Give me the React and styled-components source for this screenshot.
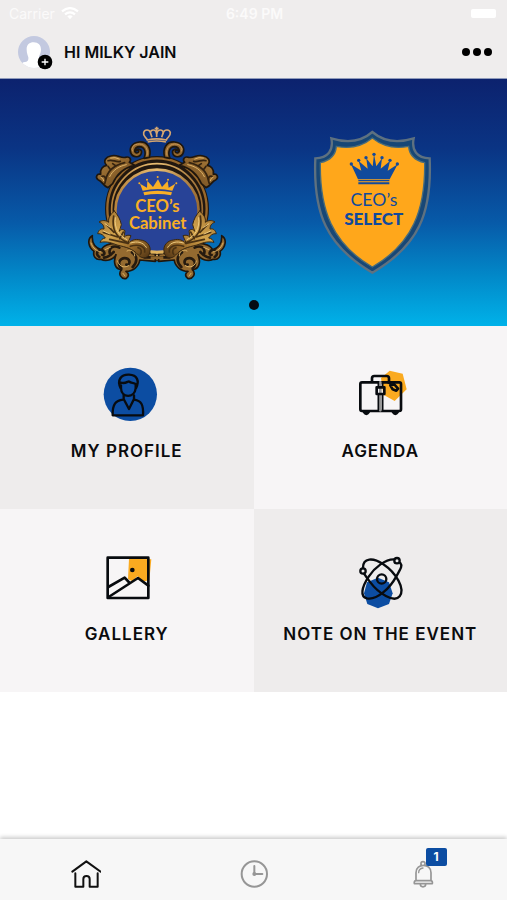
import React from 'react'
import styled, { createGlobalStyle } from 'styled-components'

const GlobalStyle = createGlobalStyle`
* { box-sizing: border-box; }
body {
  margin: 0;
  background: #fff;
  font-family: Inter, "Liberation Sans", sans-serif;
  color: #0b0b0d;
}
`;

const Page = styled.div`
  min-height: 100vh;
  display: flex;
  flex-direction: column;
`;

const Header = styled.header`
  background: #efeded;
  border-bottom: 1px solid #8f9bbb;
`;

const StatusBar = styled.div`
  display: grid;
  grid-template-columns: 1fr auto 1fr;
  align-items: center;
  height: 27px;
  padding: 0 11px 0 9px;
  color: #fbfafa;
  font-size: 14px;
`;

const Carrier = styled.div`
  display: flex;
  align-items: center;
  gap: 6px;
`;

const Time = styled.span`
  font-weight: 600;
  padding-left: 4px;
`;

const Battery = styled.span`
  justify-self: end;
  width: 25px;
  height: 9px;
  border-radius: 2px;
  background: #fff;
`;

const UserBar = styled.div`
  display: flex;
  align-items: center;
  height: 51px;
  padding: 0 15px 2px 17px;
  gap: 11px;
`;

const Name = styled.h1`
  flex: 1;
  margin: 0;
  font-size: 16px;
  line-height: 24px;
  font-weight: 600;
`;

const IconButton = styled.button`
  display: flex;
  padding: 0;
  border: 0;
  background: none;
  cursor: pointer;
`;

const Banner = styled.section`
  display: flex;
  flex-direction: column;
  align-items: center;
  gap: 10px;
  padding: 36px 0 16px;
  background: linear-gradient(#0c226e 0%, #0a3484 28%, #075aa8 58%, #0289c9 80%, #00b2e9 100%);
`;

const Awards = styled.div`
  display: flex;
  align-items: center;
  justify-content: center;
  gap: 65px;
  padding-left: 18px;
`;

const Dot = styled.span`
  width: 10px;
  height: 10px;
  border-radius: 50%;
  background: #050b12;
`;

const Tiles = styled.main`
  display: grid;
  grid-template-columns: 1fr 1fr;
`;

const Tile = styled.a`
  display: flex;
  flex-direction: column;
  align-items: center;
  gap: 12px;
  padding: 37px 0 46px;
  background: ${(props) => (props.$dark ? '#eeecec' : '#f7f5f6')};
  color: inherit;
  text-decoration: none;
  font-size: 17px;
  line-height: 24px;
  font-weight: 600;
  letter-spacing: 1px;
`;

const TabBar = styled.nav`
  display: grid;
  grid-template-columns: repeat(3, 1fr);
  justify-items: center;
  margin-top: auto;
  padding: 19px 0 10px;
  background: #f7f7f7;
  box-shadow: 0 -2px 4px rgba(0, 0, 0, 0.2);
`;

const Tab = styled.a`
  position: relative;
  display: flex;
  color: ${(props) => (props.$active ? '#111' : '#969696')};
`;

const Badge = styled.span`
  position: absolute;
  left: 19px;
  top: -10px;
  width: 21px;
  border-radius: 2px;
  background: #0c4da2;
  color: #fff;
  font-size: 12px;
  line-height: 18px;
  font-weight: 700;
  text-align: center;
`;

const WifiIcon = () => (
  <svg width="18" height="13" viewBox="0 0 54 39" fill="none" stroke="#fff" strokeWidth="7">
    <path d="M3 13 Q27 -6 51 13" />
    <path d="M12 22 Q27 10 42 22" />
    <path d="M19 28 Q27 22 35 28 L27 37 Z" fill="#fff" stroke="none" />
  </svg>
)

const Avatar = () => (
  <svg width="36" height="36" viewBox="0 0 108 108">
    <defs>
      <clipPath id="avatarClip"><circle cx="51" cy="54" r="48" /></clipPath>
    </defs>
    <g clipPath="url(#avatarClip)">
      <rect width="108" height="108" fill="#c3c9e0" />
      <path d="M50 25C36 25 28 34 29 47C29 58 33 64 34 70C35 80 31 84 24 84C17 84 12 90 12 96L20 108H90V84C74 84 66 80 66 68C67 63 72 57 72 47C72 34 64 25 50 25Z" fill="#fff" />
    </g>
    <circle cx="84" cy="84" r="22" fill="#000" />
    <path d="M84 74V94M74 84H94" stroke="#fff" strokeWidth="4" />
  </svg>
)

const MoreIcon = () => (
  <svg width="30" height="8" viewBox="0 0 90 24">
    <circle cx="12" cy="12" r="12" />
    <circle cx="45" cy="12" r="12" />
    <circle cx="78" cy="12" r="12" />
  </svg>
)

const FrameSide = () => (
  <g stroke="#1f160d" strokeWidth="5" strokeLinejoin="round" strokeLinecap="round">
    {/* top scroll */}
    <path d="M208 127C216 98 200 79 178 81C157 83 147 98 152 113C158 129 180 129 184 115C187 104 174 98 168 107C179 101 179 115 169 114C161 111 163 96 178 95C193 95 200 110 192 130Z" fill="#94682e" />
    <path d="M157 108C151 93 168 84 184 88C201 93 204 108 201 121" fill="none" stroke="#c8985a" strokeWidth="3" />
    {/* upper leaf */}
    <path d="M84 218C66 210 68 199 54 194C45 187 51 174 62 178C59 162 70 153 80 151C67 138 79 125 92 123C111 116 121 131 136 127C149 123 156 133 148 142L164 151C137 157 111 176 98 206Z" fill="url(#leaf)" />
    <path d="M77 196C82 167 104 150 134 143M84 137C98 132 107 143 121 139M66 184C77 181 79 193 74 206M92 165L84 154M108 153L98 146" fill="none" stroke="#35230f" strokeWidth="5" />
    <path d="M89 185C99 164 116 154 139 149M92 129Q105 125 118 132M63 187Q70 188 71 197" fill="none" stroke="#e0b468" strokeWidth="3" />
    {/* lower curls */}
    <path d="M37 362C20 372 25 397 42 409C38 424 48 436 62 433C80 441 102 433 108 419C98 444 106 463 125 464C112 477 125 494 139 490C151 482 142 470 138 469C160 469 178 452 179 435L226 439V417L188 412L115 386C88 381 66 395 65 405C46 399 35 385 37 362Z" fill="#946a30" />
    <path d="M58 426C48 421 49 407 60 405C75 404 77 421 67 420M91 420C82 397 101 390 118 398M124 460C109 445 122 426 139 430C153 435 150 451 139 449M156 412C174 425 172 442 158 456M193 427H226M72 428C86 427 92 420 101 411" fill="none" stroke="#251a0f" strokeWidth="8" />
    <path d="M33 384C38 400 51 409 63 411M113 438C115 451 130 462 146 452M141 408C154 400 165 410 164 423M129 475L135 483M75 404L91 397" fill="none" stroke="#dcb063" strokeWidth="3" />
    {/* large leaf */}
    <path d="M103 288C91 299 84 308 86 322C77 315 66 315 57 321C69 326 72 333 72 342C61 340 56 346 53 356C65 355 70 361 76 369C67 370 63 375 60 382C82 378 95 384 111 390C140 397 158 401 175 420C188 435 207 429 210 411C214 389 197 376 181 375C166 370 151 377 143 386L153 362C145 359 137 361 132 367L135 347C127 341 121 344 118 349L124 329C121 313 113 299 103 288Z" fill="url(#gold)" stroke="#3a270f" strokeWidth="3" />
    <path d="M101 303C94 344 111 371 145 383M82 331L102 352M70 352L113 366M89 373L145 385M130 351L119 371M151 394C175 386 197 394 194 411M174 398C185 401 186 411 181 418" fill="none" stroke="#4b3213" strokeWidth="5" />
    <path d="M106 308C102 341 117 363 141 374M75 326L91 337M70 348L90 357M152 384C173 377 190 382 199 397" fill="none" stroke="#efcc80" strokeWidth="3" />
  </g>
)

const CabinetBadge = () => (
  <svg width="155" height="175" viewBox="0 0 465 525">
    <defs>
      <linearGradient id="gold" x1="0" y1="0" x2="1" y2="1">
        <stop offset="0" stopColor="#96692c" />
        <stop offset="0.4" stopColor="#d3a44d" />
        <stop offset="0.7" stopColor="#9b6c2b" />
        <stop offset="1" stopColor="#4d3214" />
      </linearGradient>
      <linearGradient id="leaf" x1="0" y1="0" x2="1" y2="1">
        <stop offset="0" stopColor="#ad7f3b" />
        <stop offset="0.5" stopColor="#8d632c" />
        <stop offset="1" stopColor="#5b3d1a" />
      </linearGradient>
      <linearGradient id="rim" x1="0" y1="0" x2="1" y2="0">
        <stop offset="0" stopColor="#b6833d" />
        <stop offset="0.5" stopColor="#e9bd72" />
        <stop offset="1" stopColor="#9a6c34" />
      </linearGradient>
    </defs>
    <ellipse cx="231" cy="281" rx="156" ry="158" fill="#21170f" />
    <ellipse cx="231" cy="281" rx="149" ry="151" fill="none" stroke="#98682c" strokeWidth="7" />
    <ellipse cx="231" cy="284" rx="136" ry="138" fill="none" stroke="url(#rim)" strokeWidth="5" />
    <ellipse cx="231" cy="288" rx="125" ry="124" fill="#284397" stroke="url(#rim)" strokeWidth="8" />
    <FrameSide />
    <g transform="translate(462 0) scale(-1 1)"><FrameSide /></g>
    <rect x="212" y="407" width="38" height="9" fill="#dfb15b" />
    <rect x="212" y="424" width="38" height="8" fill="#8d642c" />
    <g fill="none" stroke="#d5a671" strokeWidth="5">
      <path d="M202 75C199 66 188 65 191 53C194 42 208 43 211 52C214 42 228 42 230 56C233 42 247 42 250 52C254 42 269 43 271 53C272 65 262 66 259 75Q230 68 202 75ZM203 81Q230 75 258 81" />
      <path d="M211 52L216 67M250 52L245 67M230 35V66M224 41H236" />
    </g>
    <g fill="#f9af26">
      <path d="M188 227L180 206L201 218L202 198L219 216L234 193L246 216L263 198L266 218L286 206L277 227Q232 217 188 227Z" />
      <path d="M190 232Q232 223 276 232L273 241Q232 233 193 241Z" />
      <circle cx="178" cy="205" r="3" /><circle cx="201" cy="194" r="3" />
      <circle cx="233" cy="186" r="3" /><circle cx="264" cy="194" r="3" />
      <circle cx="289" cy="205" r="3" />
      <text fontFamily="Lato, sans-serif" fontWeight="700" fontSize="50" textAnchor="middle">
        <tspan x="232" y="292">CEO’s</tspan>
        <tspan x="233" y="343">Cabinet</tspan>
      </text>
    </g>
  </svg>
)

const SelectBadge = () => (
  <svg width="145" height="165" viewBox="0 0 435 495">
    <path d="M217 36C184 65 139 69 94 55C101 91 84 114 46 115C39 280 79 377 217 458C356 377 396 280 389 115C351 114 334 91 341 55C296 69 251 65 217 36Z" fill="#174776" stroke="#5e7180" strokeWidth="7" />
    <path d="M217 54C187 79 148 87 109 79C107 106 88 122 61 128C59 268 96 371 217 441C339 371 376 268 374 128C347 122 328 106 326 79C287 87 248 79 217 54Z" fill="#ffa71b" stroke="#486c7b" strokeWidth="4" />
    <g fill="#114a9c">
      <path d="M174 178L153 133L184 152L176 123L203 146L199 115L218 139L222 103L229 139L246 115L242 146L270 123L263 152L293 133L269 178Z" />
      <path d="M175 180H268V184H175ZM175 187H268V193H175Z" />
      <circle cx="154" cy="132" r="5" /><circle cx="176" cy="121" r="5" />
      <circle cx="198" cy="113" r="5" /><circle cx="222" cy="103" r="5" />
      <circle cx="246" cy="113" r="5" /><circle cx="270" cy="121" r="5" />
      <circle cx="292" cy="132" r="5" />
      <text fontFamily="Lato, sans-serif" textAnchor="middle">
        <tspan x="222" y="257" fontSize="53" fontWeight="400">CEO’s</tspan>
        <tspan x="221" y="314" fontSize="51" fontWeight="900">SELECT</tspan>
      </text>
    </g>
  </svg>
)

const TileIcon = ({ viewBox, children }) => (
  <svg width="64" height="64" viewBox={viewBox} fill="none" stroke="#080b0f" strokeWidth="8" strokeLinejoin="round" strokeLinecap="round">
    {children}
  </svg>
)

const ProfileIcon = () => (
  <TileIcon viewBox="104 24 192 192">
    <circle cx="210" cy="118" r="80" fill="#0c4da2" stroke="none" />
    <g strokeWidth="7">
      <path d="M181 100C169 75 182 58 206 59C231 60 238 78 227 100M181 83C198 88 204 76 207 80C212 85 220 82 228 88M182 91V100C183 130 223 130 226 100V89" />
      <path d="M190 121V132L206 162L221 132V121M188 134C166 137 156 147 157 181H248C250 147 242 138 222 134" />
    </g>
  </TileIcon>
)

const AgendaIcon = () => (
  <TileIcon viewBox="84 24 192 192">
    <path d="M209 47L248 56L260 103L224 138L190 119L183 69Z" fill="#faaa20" stroke="none" />
    <rect x="121" y="82" width="122" height="86" rx="5" />
    <path d="M156 80V70Q156 63 163 63H200Q207 63 207 70V80" />
    <path d="M181 82V166" stroke="#999" />
    <path d="M175 82V96M188 82V96M175 119V166M188 119V166" strokeWidth="5" />
    <rect x="170" y="97" width="23" height="20" />
    <path d="M203 82L214 88" strokeWidth="6" />
    <path d="M211 91L222 87L234 101L229 107L218 103ZM132 171Q139 182 146 171ZM219 171Q226 182 233 171Z" />
  </TileIcon>
)

const GalleryIcon = () => (
  <TileIcon viewBox="74 18 192 192">
    <path d="M176 56L243 58L237 120L218 125L201 109L186 124L173 117Z" fill="#faaa20" stroke="none" />
    <rect x="112" y="53" width="122" height="121" />
    <path d="M114 141L163 113L178 129M115 171L203 114L234 137" />
    <circle cx="186" cy="90" r="3" fill="#080b0f" />
  </TileIcon>
)

const EventIcon = () => (
  <TileIcon viewBox="219 3 192 192">
    <path d="M309 98L342 112L353 145L342 177L309 190L277 177L267 145L276 112Z" fill="#0c4da2" stroke="none" />
    <g strokeWidth="7">
      <path d="M264 68C264 38 294 37 324 57C364 84 391 131 374 154C357 175 310 144 286 112C276 99 269 89 267 86" />
      <path d="M357 43C332 42 299 67 281 95C260 127 254 155 276 160C307 166 345 129 364 94C380 67 382 61 376 54" />
      <circle cx="264" cy="78" r="8" />
      <circle cx="366" cy="47" r="8" />
      <circle cx="320" cy="102" r="14" />
    </g>
  </TileIcon>
)

const TabIcon = ({ viewBox, children }) => (
  <svg width="32" height="32" viewBox={viewBox} fill="none" stroke="currentColor" strokeWidth="6" strokeLinejoin="round" strokeLinecap="round">
    {children}
  </svg>
)

const HomeIcon = () => (
  <TabIcon viewBox="205 99 96 96">
    <path d="M215 140L257 109L300 140M224 145V185H248V162C248 150 267 150 267 162V185H291V145" />
  </TabIcon>
)

const ClockIcon = () => (
  <TabIcon viewBox="22 99 96 96">
    <circle cx="71" cy="147" r="38" />
    <path d="M71 123V147H95" />
    <circle cx="71" cy="147" r="3" />
  </TabIcon>
)

const BellIcon = () => (
  <TabIcon viewBox="529 99 96 96">
    <g strokeWidth="5">
      <path d="M571 122V115C571 108 583 108 583 115V122M556 166V143C556 114 601 114 601 143V166M551 176C550 171 551 167 556 167H600C605 167 606 171 605 176ZM569 178C569 188 585 188 585 178" />
      <path d="M564 143C564 134 569 130 577 129" strokeWidth="4" />
    </g>
  </TabIcon>
)

const tiles = [
  { label: 'MY PROFILE', href: '#profile', Icon: ProfileIcon, dark: true },
  { label: 'AGENDA', href: '#agenda', Icon: AgendaIcon, dark: false },
  { label: 'GALLERY', href: '#gallery', Icon: GalleryIcon, dark: false },
  { label: 'NOTE ON THE EVENT', href: '#note', Icon: EventIcon, dark: true },
]

const App = () => {
  return (
    <>
      <GlobalStyle />
      <Page>
        <Header>
          <StatusBar>
            <Carrier>Carrier <WifiIcon /></Carrier>
            <Time>6:49 PM</Time>
            <Battery />
          </StatusBar>
          <UserBar>
            <IconButton aria-label="Change photo"><Avatar /></IconButton>
            <Name>HI MILKY JAIN</Name>
            <IconButton aria-label="More"><MoreIcon /></IconButton>
          </UserBar>
        </Header>
        <Banner>
          <Awards>
            <CabinetBadge />
            <SelectBadge />
          </Awards>
          <Dot />
        </Banner>
        <Tiles>
          {tiles.map(({ label, href, Icon, dark }) => (
            <Tile key={label} href={href} $dark={dark}>
              <Icon />
              {label}
            </Tile>
          ))}
        </Tiles>
        <TabBar>
          <Tab href="#home" aria-label="Home" $active><HomeIcon /></Tab>
          <Tab href="#history" aria-label="History"><ClockIcon /></Tab>
          <Tab href="#notifications" aria-label="Notifications">
            <BellIcon />
            <Badge>1</Badge>
          </Tab>
        </TabBar>
      </Page>
    </>
  )
}

export default App
